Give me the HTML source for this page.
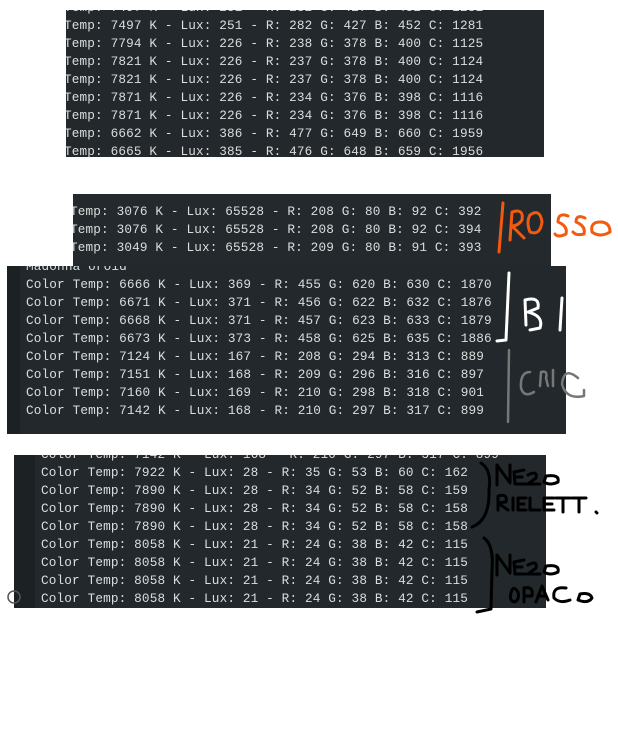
<!DOCTYPE html>
<html><head><meta charset="utf-8"><style>
body{margin:0;width:618px;height:748px;background:#fff;position:relative;overflow:hidden}
.b{position:absolute;background:#22282b;overflow:hidden}
.t{position:absolute;font-family:"Liberation Mono",monospace;font-size:12.7px;letter-spacing:0.15px;color:#dcdede;line-height:18px;white-space:pre}
.g{position:absolute;left:0;top:0;bottom:0;background:#1c2124}
svg{position:absolute;left:0;top:0}
</style></head><body>
<div class="b" style="left:66px;top:10px;width:478px;height:147px">
<div class="t" style="left:-2px;top:-11px">Temp: 7497 K - Lux: 251 - R: 282 G: 427 B: 452 C: 1281
Temp: 7497 K - Lux: 251 - R: 282 G: 427 B: 452 C: 1281
Temp: 7794 K - Lux: 226 - R: 238 G: 378 B: 400 C: 1125
Temp: 7821 K - Lux: 226 - R: 237 G: 378 B: 400 C: 1124
Temp: 7821 K - Lux: 226 - R: 237 G: 378 B: 400 C: 1124
Temp: 7871 K - Lux: 226 - R: 234 G: 376 B: 398 C: 1116
Temp: 7871 K - Lux: 226 - R: 234 G: 376 B: 398 C: 1116
Temp: 6662 K - Lux: 386 - R: 477 G: 649 B: 660 C: 1959
Temp: 6665 K - Lux: 385 - R: 476 G: 648 B: 659 C: 1956</div></div>
<div class="b" style="left:73px;top:194px;width:478px;height:72px;background:#23292c">
<div class="t" style="left:-3px;top:9px">Temp: 3076 K - Lux: 65528 - R: 208 G: 80 B: 92 C: 392
Temp: 3076 K - Lux: 65528 - R: 208 G: 80 B: 92 C: 394
Temp: 3049 K - Lux: 65528 - R: 209 G: 80 B: 91 C: 393</div></div>
<div class="b" style="left:7px;top:266px;width:559px;height:168px">
<div class="g" style="width:13px"></div>
<div class="t" style="left:19px;top:-8px">Madonna oroid
Color Temp: 6666 K - Lux: 369 - R: 455 G: 620 B: 630 C: 1870
Color Temp: 6671 K - Lux: 371 - R: 456 G: 622 B: 632 C: 1876
Color Temp: 6668 K - Lux: 371 - R: 457 G: 623 B: 633 C: 1879
Color Temp: 6673 K - Lux: 373 - R: 458 G: 625 B: 635 C: 1886
Color Temp: 7124 K - Lux: 167 - R: 208 G: 294 B: 313 C: 889
Color Temp: 7151 K - Lux: 168 - R: 209 G: 296 B: 316 C: 897
Color Temp: 7160 K - Lux: 169 - R: 210 G: 298 B: 318 C: 901
Color Temp: 7142 K - Lux: 168 - R: 210 G: 297 B: 317 C: 899</div></div>
<div class="b" style="left:14px;top:455px;width:532px;height:153px">
<div class="g" style="width:21px"></div>
<div class="t" style="left:27px;top:-9px">Color Temp: 7142 K - Lux: 168 - R: 210 G: 297 B: 317 C: 899
Color Temp: 7922 K - Lux: 28 - R: 35 G: 53 B: 60 C: 162
Color Temp: 7890 K - Lux: 28 - R: 34 G: 52 B: 58 C: 159
Color Temp: 7890 K - Lux: 28 - R: 34 G: 52 B: 58 C: 158
Color Temp: 7890 K - Lux: 28 - R: 34 G: 52 B: 58 C: 158
Color Temp: 8058 K - Lux: 21 - R: 24 G: 38 B: 42 C: 115
Color Temp: 8058 K - Lux: 21 - R: 24 G: 38 B: 42 C: 115
Color Temp: 8058 K - Lux: 21 - R: 24 G: 38 B: 42 C: 115
Color Temp: 8058 K - Lux: 21 - R: 24 G: 38 B: 42 C: 115</div></div>
<svg width="618" height="748" fill="none" stroke-linecap="round" stroke-linejoin="round">
<g stroke="#f25a10" stroke-width="3">
<path d="M503 203 L499 252"/>
<path d="M510 240 L512 212 Q524 208 522 220 Q518 226 512 226 L524 238"/>
<path d="M530 215 Q540 208 542 222 Q540 236 530 232 Q526 222 530 215"/>
<path d="M568 216 Q558 212 558 222 Q568 226 566 234 Q558 238 555 234"/>
<path d="M585 218 Q576 214 576 222 Q586 226 584 234 Q576 236 573 232"/>
<path d="M600 222 Q590 222 592 232 Q600 238 610 232 Q610 222 600 222"/>
</g>
<g stroke="#fff" stroke-width="3">
<path d="M509 273 L506 340 L497 341"/>
<path d="M526 325 L525 300 Q540 296 538 308 L528 312 Q544 316 540 328 L530 330"/>
<path d="M562 298 L560 330"/>
</g>
<g stroke="#777" stroke-width="2.5">
<path d="M509 350 L508 422"/>
<path d="M530 372 Q520 372 521 388 Q524 398 534 392"/>
<path d="M540 386 L541 372 Q548 370 546 378 L548 386"/>
<path d="M553 370 L553 386"/>
<path d="M578 378 Q564 366 562 384 Q566 400 584 396 L584 390"/>
</g>
<g stroke="#000" stroke-width="3">
<path d="M481 463 Q492 470 489 490 Q490 520 472 527"/>
<path d="M484 538 Q494 545 492 570 L491 609 L477 612"/>
<path d="M497 485 L497 465 L510 483 L510 465"/>
<path d="M524 470 L514 472 L515 484 L526 484 M515 477 L522 477"/>
<path d="M528 475 Q538 470 536 478 L528 484 L540 484"/>
<path d="M546 476 Q560 474 558 482 Q550 486 544 482 Z"/>
<path d="M498 510 L498 496 Q508 493 506 502 L498 503 L508 510"/>
<path d="M513 498 L513 510 M518 498 L518 510 L526 510 M518 504 L524 504 M518 498 L526 498"/>
<path d="M530 498 L530 510 L540 510 M544 498 L544 510 L554 510 M544 504 L552 504 M544 498 L554 498"/>
<path d="M556 498 L570 498 M563 498 L563 512 M572 498 L586 498 M579 498 L579 512 M596 512 L597 513"/>
<path d="M497 575 L497 555 L510 573 L510 555"/>
<path d="M524 560 L514 562 L515 574 L526 574 M515 567 L522 567"/>
<path d="M528 565 Q538 560 536 568 L528 574 L540 574"/>
<path d="M546 566 Q560 564 558 572 Q550 576 544 572 Z"/>
<path d="M512 590 Q508 600 514 602 Q520 600 518 592 Q514 586 512 590"/>
<path d="M524 602 L524 588 Q534 586 532 596 L524 596"/>
<path d="M536 602 L542 586 L548 600 M538 596 L546 596"/>
<path d="M566 588 Q552 586 554 598 Q560 604 570 600"/>
<path d="M580 594 Q590 592 592 598 Q588 604 578 600 Z"/>
</g>
<circle cx="14" cy="597" r="6" stroke="#555" stroke-width="1.5"/>
</svg>
</body></html>
